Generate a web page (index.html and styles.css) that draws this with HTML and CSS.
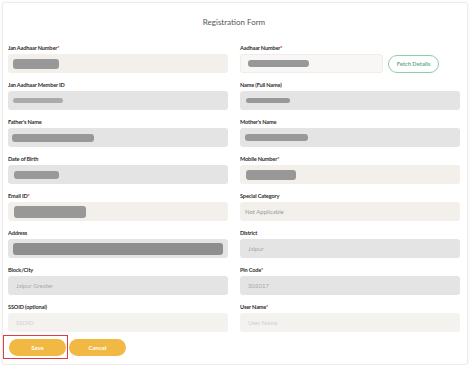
FILE: index.html
```html
<!DOCTYPE html>
<html>
<head>
<meta charset="utf-8">
<link rel="stylesheet" href="styles.css">
</head>
<body>
<div class="card">
  <h1 class="title">Registration Form</h1>
  <div class="grid">
    <div class="field">
      <label>Jan Aadhaar Number<span class="req">*</span></label>
      <div class="input edit"><span class="blob" style="width:46px;height:10px"></span></div>
    </div>
    <div class="field">
      <label>Aadhaar Number<span class="req">*</span></label>
      <div class="row">
        <div class="input white grow"><span class="blob" style="width:61px;height:7px;margin-left:2px"></span></div>
        <button class="fetch">Fetch Details</button>
      </div>
    </div>

    <div class="field">
      <label>Jan Aadhaar Member ID</label>
      <div class="input dis"><span class="blob light" style="width:50px;height:5px"></span></div>
    </div>
    <div class="field">
      <label>Name (Full Name)</label>
      <div class="input dis"><span class="blob" style="width:44px;height:5px;margin-left:1px"></span></div>
    </div>

    <div class="field">
      <label>Father's Name</label>
      <div class="input dis"><span class="blob" style="width:82px;height:8px;margin-left:-1px"></span></div>
    </div>
    <div class="field">
      <label>Mother's Name</label>
      <div class="input dis"><span class="blob" style="width:63px;height:7px"></span></div>
    </div>

    <div class="field">
      <label>Date of Birth</label>
      <div class="input dis"><span class="blob" style="width:45px;height:8px;margin-left:1px"></span></div>
    </div>
    <div class="field">
      <label>Mobile Number<span class="req">*</span></label>
      <div class="input edit"><span class="blob" style="width:50px;height:10px;margin-left:1px"></span></div>
    </div>

    <div class="field">
      <label>Email ID<span class="req">*</span></label>
      <div class="input edit"><span class="blob" style="width:72px;height:12px;margin-left:1px"></span></div>
    </div>
    <div class="field">
      <label>Special Category</label>
      <div class="input edit select">Not Applicable</div>
    </div>

    <div class="field">
      <label>Address</label>
      <div class="input dis"><span class="blob dark" style="width:210px;height:12px"></span></div>
    </div>
    <div class="field">
      <label>District</label>
      <div class="input dis">Jaipur</div>
    </div>

    <div class="field">
      <label>Block/City</label>
      <div class="input dis">Jaipur Greater</div>
    </div>
    <div class="field">
      <label>Pin Code<span class="req">*</span></label>
      <div class="input dis">302017</div>
    </div>

    <div class="field">
      <label>SSOID (optional)</label>
      <div class="input light ph">SSOID</div>
    </div>
    <div class="field">
      <label>User Name<span class="req">*</span></label>
      <div class="input light ph">User Name</div>
    </div>
  </div>
  <div class="actions">
    <button class="btn">Save</button>
    <button class="btn">Cancel</button>
    <span class="highlight"></span>
  </div>
</div>
</body>
</html>
```
FILE: styles.css
```css
* { box-sizing: border-box; }
html, body { margin: 0; padding: 0; background: #fff; }
body { font-family: Lato, "Noto Sans", sans-serif; }

.card {
  margin: 2px 2px 0 2px;
  height: 363px;
  border: 1px solid #ececec;
  border-radius: 3px;
  box-shadow: 0 0 3px rgba(0,0,0,0.06);
  padding: 13px 7px 0 5px;
  background: #fff;
}

.title {
  margin: 0;
  font-size: 8px;
  line-height: 12px;
  font-weight: 400;
  color: #555;
  text-align: center;
}

.grid {
  margin-top: 15px;
  display: grid;
  grid-template-columns: 220px 220px;
  column-gap: 12px;
}

.field {
  display: flex;
  flex-direction: column;
  height: 37px;
}

.field label {
  font-size: 5.6px;
  line-height: 10px;
  font-weight: 700;
  letter-spacing: -0.15px;
  color: #2e2e2e;
  margin-bottom: 1px;
  white-space: nowrap;
}

.req { color: #e0353a; }

.row { display: flex; align-items: center; gap: 5px; }
.grow { flex: 0 0 143px; }

.input {
  height: 19px;
  border-radius: 3px;
  display: flex;
  align-items: center;
  padding-left: 5px;
  font-size: 6px;
  color: #a9a9a9;
}
.input.edit { background: #f3f0ec; }
.input.white { background: #f8f7f5; border: 1px solid #efedea; }
.input.dis { background: #e4e4e4; }
.input.dis:not(:has(.blob)) { padding-left: 8px; }
.input.light { background: #f4f2ef; color: #cfcfcf; padding-left: 8px; }
.input.select { padding-left: 5px; color: #9a9a9a; }

.blob {
  display: block;
  background: #989898;
  border-radius: 3px;
  filter: blur(0.7px);
}
.blob.light { background: #ababab; }
.blob.dark { background: #8e8e8e; }

.fetch {
  width: 51px;
  height: 18px;
  border: 1px solid #8ccfa8;
  border-radius: 9px;
  background: #fff;
  color: #6fae8c;
  font-family: Lato, "Noto Sans", sans-serif;
  font-size: 5.8px;
  font-weight: 700;
  padding: 0;
}

.actions {
  position: relative;
  display: flex;
  gap: 3px;
  margin-top: 0px;
  padding-left: 1px;
}

.btn {
  width: 57px;
  height: 17px;
  border: none;
  border-radius: 9px;
  background: #f2b844;
  color: #fff;
  font-family: Lato, "Noto Sans", sans-serif;
  font-size: 6px;
  font-weight: 700;
  padding: 0;
}

.highlight {
  position: absolute;
  left: -5px;
  top: -4px;
  width: 65px;
  height: 24px;
  border: 1.5px solid #e23a3f;
}
```
